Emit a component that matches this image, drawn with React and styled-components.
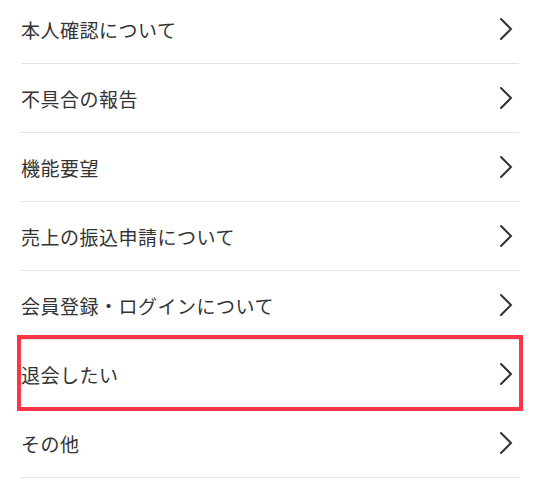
import React from "react";
import styled, { createGlobalStyle } from "styled-components";

const Global = createGlobalStyle`
  html, body { margin: 0; padding: 0; background: #fff; }
  body { font-family: "Noto Sans CJK JP", "Noto Sans", sans-serif; }
`;

const Page = styled.div`
  width: 540px;
  height: 480px;
  overflow: hidden;
  background: #fff;
`;

const List = styled.ul`
  list-style: none;
  margin: -5px 0 0;
  padding: 0 21px;
`;

const Row = styled.li`
  position: relative;
  height: 68px;
  display: flex;
  align-items: center;
  justify-content: space-between;
  border-bottom: 1px solid #e3e3e3;
  ${(p) =>
    p.$highlight &&
    `
    &::after {
      content: "";
      position: absolute;
      top: -5px;
      bottom: -3px;
      left: -4px;
      right: -4px;
      border: 4px solid #fc3646;
      pointer-events: none;
    }
  `}
`;

const Label = styled.span`
  font-size: 19px;
  font-weight: 400;
  color: #333;
  letter-spacing: 0.5px;
  line-height: 1;
`;

const Chevron = styled.svg`
  width: 14px;
  height: 24px;
  margin-right: 6px;
  flex: none;
`;

const items = [
  "本人確認について",
  "不具合の報告",
  "機能要望",
  "売上の振込申請について",
  "会員登録・ログインについて",
  "退会したい",
  "その他",
];

export default function App() {
  return (
    <Page>
      <Global />
      <List>
        {items.map((t, i) => (
          <Row key={t} $highlight={i === 5}>
            <Label>{t}</Label>
            <Chevron viewBox="0 0 14 24">
              <polyline
                points="2,2 12,12 2,22"
                fill="none"
                stroke="#333"
                strokeWidth="2"
                strokeLinecap="round"
                strokeLinejoin="miter"
              />
            </Chevron>
          </Row>
        ))}
      </List>
    </Page>
  );
}
